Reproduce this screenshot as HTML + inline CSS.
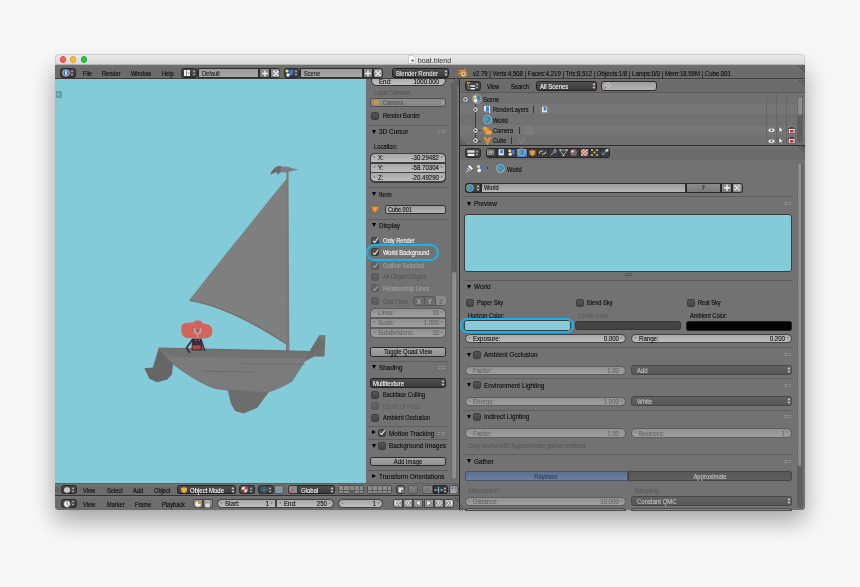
<!DOCTYPE html><html><head><meta charset="utf-8"><style>
*{margin:0;padding:0;box-sizing:border-box}
html,body{width:860px;height:587px;overflow:hidden;background:#f7f7f7;font-family:"Liberation Sans",sans-serif}
div{position:absolute}
.t{height:10px;line-height:10px;white-space:nowrap;-webkit-text-stroke:0.07px currentColor;transform:scaleX(0.87);transform-origin:0 50%}
.r{transform-origin:100% 50%}
.c{transform-origin:50% 50%}
</style></head><body><div style="left:0;top:0;width:860px;height:587px;filter:blur(0.35px)"><div style="left:55px;top:60px;width:750px;height:450px;box-shadow:0 10px 24px rgba(0,0,0,0.36);border-radius:4px;background:#777"></div>
<div style="left:55px;top:53.5px;width:750px;height:11.5px;background:linear-gradient(#e9e9e9,#dadada);border-radius:4px 4px 0 0;border:0.5px solid #cdcdcd;border-bottom:0.8px solid #b5b5b5"></div>
<div style="left:59.599999999999994px;top:56.4px;width:6.4px;height:6.4px;border-radius:50%;background:#fc5f57;border:0.5px solid #df4744"></div>
<div style="left:70.1px;top:56.4px;width:6.4px;height:6.4px;border-radius:50%;background:#fdbc2e;border:0.5px solid #dea123"></div>
<div style="left:80.5px;top:56.4px;width:6.4px;height:6.4px;border-radius:50%;background:#28c840;border:0.5px solid #1dad2b"></div>
<svg style="position:absolute;left:408.3px;top:55.3px" width="8" height="9" viewBox="0 0 8 9"><path d="M0.5 0.5 H5 L7.5 3 V8.5 H0.5Z" fill="#fbfbfb" stroke="#b8b8b8" stroke-width="0.6"/><circle cx="4.6" cy="5.6" r="1.7" fill="#f0a040"/><circle cx="4.7" cy="5.6" r="0.8" fill="#4a7ac0"/></svg>
<div class="t" style="left:417.7px;top:55.6px;font-size:7.2px;color:#4a4a4a;transform:none;-webkit-text-stroke:0.1px #4a4a4a;">boat.blend</div>
<div style="left:55px;top:65px;width:750px;height:14px;background:linear-gradient(#727272,#6b6b6b 25%,#6b6b6b);border-bottom:1px solid #3c3c3c"></div>
<div style="left:55px;top:79px;width:311px;height:404px;background:#84cbd9"></div>
<svg style="position:absolute;left:0;top:0" width="366" height="483" viewBox="0 0 366 483">
<defs><clipPath id="vp"><rect x="55" y="79" width="311" height="404"/></clipPath></defs>
<g clip-path="url(#vp)">
<!-- sail -->
<path d="M287.5 177.5 C 265 205, 225 255, 190 299 C 189.2 300.2, 189.8 300.8, 191 301 C 216 305, 246 318, 287.5 345 Z" fill="#7f7f7f"/>
<path d="M189.8 300.3 C 216 304.5, 246 317.5, 287.5 344.5" fill="none" stroke="#6f6f6f" stroke-width="1.3"/>
<!-- mast -->
<path d="M286.5 171.5 L 288.5 171.5 L 289.3 352 L 285.9 352 Z" fill="#7a7a7a"/>
<!-- flag -->
<path d="M270.2 175 C 271.5 171, 274 167.5, 278 166 C 280 165.8, 282 166.2, 283 167.5 L 283 171.5 C 281 172, 279.5 172.5, 277.5 175 C 277 173.5, 277 172.5, 277.5 172 C 275 172.5, 272.5 173.5, 270.2 175 Z" fill="#6a6a6a"/>
<path d="M280.5 167.5 C 283 166, 287 166, 290 167.5 C 292 168.3, 294 168.8, 299.2 169.4 C 295 170, 292 170.5, 290 171.5 C 287 172.8, 283 172.8, 280.5 171.5 Z" fill="#7d7d7d"/>
<!-- stern tail -->
<path d="M158.7 348 L 156 357 L 152.8 367.5 L 144.3 368.2 L 149.4 378.8 L 157 382.2 L 167.3 379.6 L 172 374.2 L 173 364 L 165 352 Z" fill="#666"/>
<!-- keel -->
<path d="M227.5 389 L 230.9 403.5 L 235.1 411.1 L 243.6 413.4 L 257.3 407.7 L 269.2 391.6 Z" fill="#6d6d6d"/>
<!-- hull body -->
<path d="M159 349 L 311.5 352 L 313.5 356.6 L 305 361 C 300 368, 296 375, 292.3 380.8 C 285 386, 275 390, 267 392.3 L 228.5 390.2 C 222 389.5, 215 388.5, 212.8 387.7 C 198 382, 185 373, 173 364 Z" fill="#7b7b7b" stroke="#717171" stroke-width="0.8"/>
<!-- deck band -->
<path d="M158.7 348 L 309.2 351.5 L 313.5 356.6 L 306 358.6 L 170 357 C 166 353.5, 162 351, 158.7 348 Z" fill="#727272"/>
<path d="M158.7 348 L 309.2 351.5" stroke="#6a6a6a" stroke-width="1.2"/>
<!-- bow -->
<path d="M305 360 L 309.2 351.5 L 319.4 335.3 L 325.4 335.3 L 324.5 356.6 L 313.5 356.6 Z" fill="#6f6f6f"/>
<path d="M319.4 335.3 L 325.4 335.3 L 322.5 341 Z" fill="#7a7a7a"/>
<path d="M309 355 L 322.5 341" stroke="#666" stroke-width="0.8"/>
<!-- hull lines -->
<path d="M203 371.1 L 254 372" stroke="#5f5f5f" stroke-width="0.6"/>
<path d="M238.5 363.4 L 305 364.6" stroke="#6c6c6c" stroke-width="0.6"/>
<!-- person -->
<path d="M192 338.5 L 201.5 338.5 L 202.5 350.5 L 191.5 350.5 Z" fill="#3a2b3e"/>
<rect x="192.6" y="345.3" width="8" height="4" fill="#b24a3c"/>
<path d="M192.5 339.5 L 186.5 347.8 L 189.8 353" fill="none" stroke="#3a2b3e" stroke-width="1.6" stroke-linejoin="round"/>
<path d="M201 339.5 L 204.8 351" fill="none" stroke="#3a2b3e" stroke-width="1.6"/>
<path d="M181.2 329 C 181 324.5, 184 322.5, 188.5 322.8 C 190.5 322.6, 192.5 322.6, 193.8 322.5 C 194 320.8, 196 320.4, 198.2 320.5 C 201 320.6, 202.6 321.8, 202.8 323.6 C 204.5 323.8, 206 324, 207.8 324.6 C 211 325.5, 212.6 328, 212.4 331.5 C 212.3 335.5, 210 337.8, 206 338.2 L 196 338.4 L 186.5 337.8 C 183 337.2, 181.2 334, 181.2 329 Z" fill="#d3645a"/>
<path d="M194.6 328.3 L 194.6 331.5 Q 197.6 336.5 200.6 331.5 L 200.6 328.3" fill="none" stroke="#abadbc" stroke-width="1.5"/>
<path d="M197.6 334.5 L 197.6 338.5" stroke="#abadbc" stroke-width="0.9"/>
<path d="M197.6 329 L 197.6 332" stroke="#a84848" stroke-width="0.9"/>
<circle cx="195.8" cy="340.3" r="0.55" fill="#bbb"/><circle cx="199.5" cy="340.3" r="0.55" fill="#bbb"/>
</g></svg>
<div style="left:55.5px;top:91px;width:6px;height:7px;background:#5f9eab;border-radius:0 1.5px 1.5px 0"></div>
<svg style="position:absolute;left:55.8px;top:92.3px" width="5" height="5"><path d="M2.5 0.5V4.5M0.5 2.5H4.5" stroke="#8cc" stroke-width="0.7"/></svg>
<div style="left:366px;top:79px;width:93px;height:404px;background:#727272"></div>
<div style="left:459px;top:79px;width:1px;height:431px;background:#2b2b2b"></div>
<div style="left:55px;top:483px;width:404px;height:13px;background:linear-gradient(#747474,#6c6c6c 30%,#6c6c6c);border-top:1px solid #5e5e5e;border-bottom:1px solid #333"></div>
<div style="left:55px;top:496px;width:404px;height:14px;background:linear-gradient(#737373,#6c6c6c 30%,#6c6c6c);border-radius:0 0 0 4px"></div>
<div style="left:460px;top:79px;width:345px;height:14px;background:linear-gradient(#717171,#6b6b6b 25%,#6b6b6b);border-bottom:1px solid #5a5a5a"></div>
<div style="left:460px;top:93px;width:345px;height:52px;background:#6f6f6f"></div>
<div style="left:460px;top:145px;width:345px;height:1px;background:#2f2f2f"></div>
<div style="left:460px;top:146px;width:345px;height:14px;background:linear-gradient(#717171,#6b6b6b 25%,#6b6b6b)"></div>
<div style="left:460px;top:160px;width:345px;height:350px;background:#727272;border-radius:0 0 4px 0"></div>
<div style="left:60px;top:68px;width:16px;height:10px;background:linear-gradient(#474747,#363636);border:0.8px solid #2a2a2a;border-radius:2.5px"></div>
<svg style="position:absolute;left:70.2px;top:69.0px" width="4" height="8" viewBox="0 0 4 8"><path d="M0.4 3.2 L2 1 L3.6 3.2Z M0.4 4.8 L2 7 L3.6 4.8Z" fill="#a8a8a8"/></svg>
<svg style="position:absolute;left:62px;top:69px" width="8" height="8" viewBox="0 0 8 8"><circle cx="4" cy="4" r="3.3" fill="#3f6fb0" stroke="#cfd8e6" stroke-width="0.8"/><rect x="3.3" y="2" width="1.4" height="4" fill="#fff"/></svg>
<div class="t" style="left:82.5px;top:68.6px;font-size:6.5px;color:#000;">File</div>
<div class="t" style="left:102.4px;top:68.6px;font-size:6.5px;color:#000;">Render</div>
<div class="t" style="left:130.9px;top:68.6px;font-size:6.5px;color:#000;">Window</div>
<div class="t" style="left:162px;top:68.6px;font-size:6.5px;color:#000;">Help</div>
<div style="left:181.3px;top:68px;width:16.5px;height:9.8px;background:linear-gradient(#474747,#363636);border:0.8px solid #2a2a2a;border-radius:2.5px"></div>
<svg style="position:absolute;left:192.0px;top:68.9px" width="4" height="8" viewBox="0 0 4 8"><path d="M0.4 3.2 L2 1 L3.6 3.2Z M0.4 4.8 L2 7 L3.6 4.8Z" fill="#a8a8a8"/></svg>
<svg style="position:absolute;left:184px;top:70px" width="6" height="6" viewBox="0 0 6 6"><rect x="0" y="0" width="2.5" height="6" fill="#eee"/><rect x="3" y="0" width="3" height="2.8" fill="#eee"/><rect x="3" y="3.2" width="3" height="2.8" fill="#eee"/></svg>
<div style="left:197.5px;top:68px;width:61.5px;height:9.8px;background:linear-gradient(#9a9a9a,#a8a8a8);border:1px solid #2e2e2e;border-radius:0"></div>
<div class="t" style="left:201.5px;top:68.5px;font-size:6.5px;color:#111;">Default</div>
<div style="left:258.9px;top:68px;width:11px;height:9.8px;background:linear-gradient(#8e8e8e,#7c7c7c);border:1px solid #2a2a2a;border-radius:0"></div>
<div class="t c" style="left:164.39999999999998px;width:200px;text-align:center;top:68.5px;font-size:6.5px;color:#000;"></div>
<div style="left:269.9px;top:68px;width:10.5px;height:9.8px;background:linear-gradient(#8e8e8e,#7c7c7c);border:1px solid #2a2a2a;border-radius:0 2.5px 2.5px 0"></div>
<div class="t c" style="left:175.14999999999998px;width:200px;text-align:center;top:68.5px;font-size:6.5px;color:#000;"></div>
<svg style="position:absolute;left:260.5px;top:69.5px" width="8" height="7" viewBox="0 0 8 7"><path d="M4 0.5V6.5M1 3.5H7" stroke="#eee" stroke-width="1.4"/></svg>
<svg style="position:absolute;left:271.5px;top:69.5px" width="8" height="7" viewBox="0 0 8 7"><path d="M1.5 1L6.5 6M6.5 1L1.5 6" stroke="#eee" stroke-width="1.2"/><rect x="1" y="0.8" width="6" height="5.4" fill="none" stroke="#ddd" stroke-width="0.6" rx="1"/></svg>
<div style="left:283.6px;top:68px;width:16.5px;height:9.8px;background:linear-gradient(#474747,#363636);border:0.8px solid #2a2a2a;border-radius:2.5px"></div>
<svg style="position:absolute;left:294.3px;top:68.9px" width="4" height="8" viewBox="0 0 4 8"><path d="M0.4 3.2 L2 1 L3.6 3.2Z M0.4 4.8 L2 7 L3.6 4.8Z" fill="#a8a8a8"/></svg>
<svg style="position:absolute;left:285px;top:69px" width="9" height="8" viewBox="0 0 9 8"><circle cx="2" cy="2" r="1.6" fill="#e8e07a"/><rect x="4.5" y="1" width="3.5" height="5" fill="#3d7bd6" rx="0.8"/><circle cx="3" cy="6" r="1.7" fill="#f0f0f0"/></svg>
<div style="left:300.1px;top:68px;width:62.6px;height:9.8px;background:linear-gradient(#9a9a9a,#a8a8a8);border:1px solid #2e2e2e;border-radius:0"></div>
<div class="t" style="left:304.1px;top:68.5px;font-size:6.5px;color:#111;">Scene</div>
<div style="left:362.7px;top:68px;width:10px;height:9.8px;background:linear-gradient(#8e8e8e,#7c7c7c);border:1px solid #2a2a2a;border-radius:0"></div>
<div class="t c" style="left:267.7px;width:200px;text-align:center;top:68.5px;font-size:6.5px;color:#000;"></div>
<div style="left:372.6px;top:68px;width:10.3px;height:9.8px;background:linear-gradient(#8e8e8e,#7c7c7c);border:1px solid #2a2a2a;border-radius:0 2.5px 2.5px 0"></div>
<div class="t c" style="left:277.75px;width:200px;text-align:center;top:68.5px;font-size:6.5px;color:#000;"></div>
<svg style="position:absolute;left:364px;top:69.5px" width="8" height="7" viewBox="0 0 8 7"><path d="M4 0.5V6.5M1 3.5H7" stroke="#eee" stroke-width="1.4"/></svg>
<svg style="position:absolute;left:374px;top:69.5px" width="8" height="7" viewBox="0 0 8 7"><path d="M1.5 1L6.5 6M6.5 1L1.5 6" stroke="#eee" stroke-width="1.2"/><rect x="1" y="0.8" width="6" height="5.4" fill="none" stroke="#ddd" stroke-width="0.6" rx="1"/></svg>
<div style="left:392.1px;top:68px;width:57.3px;height:9.8px;background:linear-gradient(#505050,#3a3a3a);border:1px solid #222;border-radius:2.5px"></div>
<div class="t" style="left:396.1px;top:69.0px;font-size:6.9px;color:#eee;-webkit-text-stroke:0.08px currentColor;">Blender Render</div>
<svg style="position:absolute;left:444.00000000000006px;top:68.9px" width="4" height="8" viewBox="0 0 4 8"><path d="M0.4 3.2 L2 1 L3.6 3.2Z M0.4 4.8 L2 7 L3.6 4.8Z" fill="#cfcfcf"/></svg>
<svg style="position:absolute;left:457px;top:68px" width="11" height="10" viewBox="0 0 11 10"><path d="M1 6.5 L5 3.8 L3.2 2.5 L7 2.6 L8.5 1" stroke="#f08a1c" stroke-width="1.4" fill="none"/><circle cx="6.5" cy="5.8" r="3.3" fill="#f08a1c"/><circle cx="6.6" cy="5.8" r="1.9" fill="#fff"/><circle cx="6.6" cy="5.8" r="1.2" fill="#3c6fb4"/></svg>
<div class="t" style="left:472.5px;top:68.6px;font-size:6.9px;color:#000;">v2.79 | Verts:4,508 | Faces:4,219 | Tris:8,512 | Objects:1/8 | Lamps:0/0 | Mem:18.59M | Cube.001</div>
<div style="left:465px;top:80.5px;width:16px;height:10.5px;background:linear-gradient(#474747,#363636);border:0.8px solid #2a2a2a;border-radius:2.5px"></div>
<svg style="position:absolute;left:475.2px;top:81.75px" width="4" height="8" viewBox="0 0 4 8"><path d="M0.4 3.2 L2 1 L3.6 3.2Z M0.4 4.8 L2 7 L3.6 4.8Z" fill="#a8a8a8"/></svg>
<svg style="position:absolute;left:467px;top:82px" width="8" height="8" viewBox="0 0 8 8"><rect x="0" y="0" width="3" height="1.5" fill="#e9a23b"/><path d="M1 1.5V7M1 4H3M1 7H3" stroke="#9ab" stroke-width="0.6" fill="none"/><rect x="3.5" y="3.2" width="4.5" height="1.5" fill="#eee"/><rect x="3.5" y="6" width="4.5" height="1.5" fill="#eee"/></svg>
<div class="t" style="left:487.3px;top:81.6px;font-size:6.5px;color:#000;">View</div>
<div class="t" style="left:510.5px;top:81.6px;font-size:6.5px;color:#000;">Search</div>
<div style="left:535.7px;top:80.5px;width:61.3px;height:10.5px;background:linear-gradient(#505050,#3a3a3a);border:1px solid #222;border-radius:2.5px"></div>
<div class="t" style="left:539.7px;top:81.85px;font-size:6.9px;color:#fff;-webkit-text-stroke:0.08px currentColor;">All Scenes</div>
<svg style="position:absolute;left:591.6px;top:81.75px" width="4" height="8" viewBox="0 0 4 8"><path d="M0.4 3.2 L2 1 L3.6 3.2Z M0.4 4.8 L2 7 L3.6 4.8Z" fill="#cfcfcf"/></svg>
<div style="left:600.8px;top:80.5px;width:56.5px;height:10.5px;background:linear-gradient(#9c9c9c,#b4b4b4);border:1px solid #2e2e2e;border-radius:3px"></div>
<svg style="position:absolute;left:603px;top:81.5px" width="8" height="8" viewBox="0 0 8 8"><circle cx="5" cy="3" r="2.2" fill="none" stroke="#d0d0d0" stroke-width="0.9"/><path d="M3.4 4.6L1 7" stroke="#c0703a" stroke-width="1.2"/></svg>
<div style="left:460px;top:93.3px;width:345px;height:10.4px;background:#717171"></div>
<div style="left:460px;top:103.7px;width:345px;height:10.4px;background:#767676"></div>
<div style="left:460px;top:114.1px;width:345px;height:10.4px;background:#717171"></div>
<div style="left:460px;top:124.5px;width:345px;height:10.4px;background:#767676"></div>
<div style="left:460px;top:134.9px;width:345px;height:10.4px;background:#717171"></div>
<div style="left:765.8px;top:93.3px;width:0.7px;height:52px;background:#666"></div>
<div style="left:775.8px;top:93.3px;width:0.7px;height:52px;background:#666"></div>
<div style="left:786.2px;top:93.3px;width:0.7px;height:52px;background:#666"></div>
<div style="left:797px;top:95.5px;width:6px;height:47px;background:#5f5f5f;border-radius:3px"></div>
<div style="left:797.1px;top:95.8px;width:5.6px;height:20px;background:linear-gradient(90deg,#868686,#929292);border:0.5px solid #6a6a6a;border-radius:3px"></div>
<div style="left:475.3px;top:103.5px;width:0.7px;height:37.5px;background:#3a3a3a"></div>
<div style="left:475.3px;top:130.3px;width:6px;height:0.7px;background:#3a3a3a"></div>
<div style="left:475.3px;top:140.6px;width:6px;height:0.7px;background:#3a3a3a"></div>
<svg style="position:absolute;left:461.7px;top:95.5px" width="7" height="7" viewBox="0 0 7 7"><circle cx="3.5" cy="3.5" r="2.7" fill="#e6e6e6" stroke="#3a3a3a" stroke-width="0.7"/><path d="M2.6 2 L4.8 3.5 L2.6 5Z" fill="#222"/></svg>
<svg style="position:absolute;left:471.5px;top:94px" width="10" height="10" viewBox="0 0 10 10"><circle cx="5" cy="5" r="4.7" fill="#8a8a8a" stroke="#aaa" stroke-width="0.5"/><circle cx="3" cy="3" r="1.6" fill="#e8e07a"/><rect x="5" y="1.5" width="3" height="5" fill="#3d7bd6" rx="0.6"/><circle cx="3.6" cy="6.6" r="1.8" fill="#f4f4f4"/></svg>
<div class="t" style="left:482.7px;top:94.6px;font-size:6.5px;color:#000;">Scene</div>
<svg style="position:absolute;left:472.2px;top:105.7px" width="7" height="7" viewBox="0 0 7 7"><circle cx="3.5" cy="3.5" r="2.7" fill="#e6e6e6" stroke="#3a3a3a" stroke-width="0.7"/><path d="M2.6 2 L4.8 3.5 L2.6 5Z" fill="#222"/></svg>
<svg style="position:absolute;left:482.5px;top:104.5px" width="8" height="9" viewBox="0 0 8 9"><rect x="0.5" y="0.5" width="7" height="8" fill="#e8e8e8" stroke="#444" stroke-width="0.5"/><rect x="3" y="1.5" width="3" height="4.5" fill="#3d7bd6"/><rect x="1" y="6.5" width="5" height="1.2" fill="#444"/></svg>
<div class="t" style="left:493.1px;top:104.8px;font-size:6.5px;color:#000;">RenderLayers</div>
<div style="left:533.3px;top:106px;width:0.8px;height:6.5px;background:#333"></div>
<svg style="position:absolute;left:539.5px;top:104.5px" width="9" height="9" viewBox="0 0 9 9"><circle cx="4.5" cy="4.5" r="4.3" fill="#7a7a7a" stroke="#999" stroke-width="0.4"/><rect x="1.8" y="1.2" width="5.5" height="6.5" fill="#e8e8e8" stroke="#444" stroke-width="0.4"/><rect x="3.6" y="2" width="2.6" height="3.6" fill="#3d7bd6"/></svg>
<svg style="position:absolute;left:482.6px;top:115.3px" width="9" height="9" viewBox="0 0 9 9"><circle cx="4.5" cy="4.5" r="4.2" fill="#3d86c6" stroke="#c8d4e4" stroke-width="0.6"/><path d="M2 3.5 Q3.5 2 5 3.2 L4.5 5.5 L2.5 6.5Z M5.5 6 L7.5 4.5 L7 7Z" fill="#5fae5f"/></svg>
<div class="t" style="left:493.1px;top:115.6px;font-size:6.5px;color:#000;">World</div>
<svg style="position:absolute;left:472.2px;top:127.0px" width="7" height="7" viewBox="0 0 7 7"><circle cx="3.5" cy="3.5" r="2.7" fill="#e6e6e6" stroke="#3a3a3a" stroke-width="0.7"/><path d="M2.6 2 L4.8 3.5 L2.6 5Z" fill="#222"/></svg>
<svg style="position:absolute;left:482.5px;top:125.8px" width="9" height="9" viewBox="0 0 9 9"><rect x="0.5" y="1.5" width="5.5" height="4" fill="#e58a2b" rx="1"/><rect x="2.5" y="4.5" width="6" height="4" fill="#f0a040" rx="1"/><circle cx="2" cy="2.2" r="1.4" fill="#f7b04a"/></svg>
<div class="t" style="left:493.1px;top:126.1px;font-size:6.5px;color:#000;">Camera</div>
<div style="left:518.5px;top:127.2px;width:0.8px;height:6.5px;background:#333"></div>
<svg style="position:absolute;left:524px;top:125.5px" width="9" height="9" viewBox="0 0 9 9"><circle cx="4.5" cy="4.5" r="4" fill="none" stroke="#8a8a8a" stroke-width="0.8"/><circle cx="4.5" cy="4.5" r="2" fill="none" stroke="#8a8a8a" stroke-width="0.7"/></svg>
<svg style="position:absolute;left:472.2px;top:137.1px" width="7" height="7" viewBox="0 0 7 7"><circle cx="3.5" cy="3.5" r="2.7" fill="#e6e6e6" stroke="#3a3a3a" stroke-width="0.7"/><path d="M2.6 2 L4.8 3.5 L2.6 5Z" fill="#222"/></svg>
<svg style="position:absolute;left:482.5px;top:136px" width="9" height="9" viewBox="0 0 9 9"><path d="M0.8 1 L4.5 8 L8.2 1" fill="none" stroke="#e58a2b" stroke-width="1.6"/><path d="M2.6 1.2 L4.5 5 L6.4 1.2" fill="none" stroke="#f7c070" stroke-width="0.7"/></svg>
<div class="t" style="left:493.1px;top:136.2px;font-size:6.5px;color:#000;">Cube</div>
<div style="left:510.8px;top:137.3px;width:0.8px;height:6.5px;background:#333"></div>
<svg style="position:absolute;left:516.5px;top:136px" width="9" height="9" viewBox="0 0 9 9"><path d="M1 1.5 L4.5 7.5 L8 1.5" fill="none" stroke="#8e8e8e" stroke-width="0.8"/></svg>
<svg style="position:absolute;left:767.5px;top:127.30000000000001px" width="7" height="6" viewBox="0 0 7 6"><ellipse cx="3.5" cy="3.2" rx="3" ry="1.7" fill="#f2f2f2"/><circle cx="3.5" cy="3.2" r="0.9" fill="#333"/></svg>
<svg style="position:absolute;left:778px;top:126.30000000000001px" width="6" height="8" viewBox="0 0 6 8"><path d="M1 0.5 L1 6.5 L2.6 5.2 L3.8 7.5 L4.6 7 L3.5 4.8 L5.5 4.6Z" fill="#f4f4f4" stroke="#222" stroke-width="0.4"/></svg>
<svg style="position:absolute;left:787.5px;top:126.80000000000001px" width="8" height="7" viewBox="0 0 8 7"><rect x="0.5" y="1.5" width="6.5" height="5" fill="#ddd" stroke="#333" stroke-width="0.5"/><rect x="2" y="3" width="3.5" height="2.5" fill="#c03030"/><rect x="2" y="0.3" width="3.5" height="1.3" fill="#333"/></svg>
<svg style="position:absolute;left:767.5px;top:137.6px" width="7" height="6" viewBox="0 0 7 6"><ellipse cx="3.5" cy="3.2" rx="3" ry="1.7" fill="#f2f2f2"/><circle cx="3.5" cy="3.2" r="0.9" fill="#333"/></svg>
<svg style="position:absolute;left:778px;top:136.6px" width="6" height="8" viewBox="0 0 6 8"><path d="M1 0.5 L1 6.5 L2.6 5.2 L3.8 7.5 L4.6 7 L3.5 4.8 L5.5 4.6Z" fill="#f4f4f4" stroke="#222" stroke-width="0.4"/></svg>
<svg style="position:absolute;left:787.5px;top:137.1px" width="8" height="7" viewBox="0 0 8 7"><rect x="0.5" y="1.5" width="6.5" height="5" fill="#ddd" stroke="#333" stroke-width="0.5"/><rect x="2" y="3" width="3.5" height="2.5" fill="#c03030"/><rect x="2" y="0.3" width="3.5" height="1.3" fill="#333"/></svg>
<div style="left:460px;top:138px;width:7px;height:7px;background:repeating-linear-gradient(45deg,#4a4a4a 0 0.9px,transparent 0.9px 1.8px);clip-path:polygon(0 0,100% 100%,0 100%)"></div>
<div style="left:465px;top:148px;width:15.8px;height:9.6px;background:linear-gradient(#474747,#363636);border:0.8px solid #2a2a2a;border-radius:2.5px"></div>
<svg style="position:absolute;left:475.0px;top:148.8px" width="4" height="8" viewBox="0 0 4 8"><path d="M0.4 3.2 L2 1 L3.6 3.2Z M0.4 4.8 L2 7 L3.6 4.8Z" fill="#a8a8a8"/></svg>
<svg style="position:absolute;left:467px;top:149.8px" width="8" height="6.5" viewBox="0 0 8 6.5"><rect x="0.3" y="0.3" width="7.4" height="2.4" fill="#ddd"/><rect x="0.3" y="3.6" width="7.4" height="2.6" fill="#f2f2f2" stroke="#333" stroke-width="0.4"/></svg>
<div style="left:485.5px;top:148px;width:124.5px;height:9.6px;background:#3c3c3c;border:1px solid #262626;border-radius:2.5px"></div>
<div style="left:495.875px;top:149px;width:0.6px;height:7.6px;background:#2a2a2a"></div>
<div style="left:506.25px;top:149px;width:0.6px;height:7.6px;background:#2a2a2a"></div>
<div style="left:517.125px;top:148.5px;width:10.375px;height:8.6px;background:linear-gradient(#6b93cf,#4c74b4)"></div>
<div style="left:527.0px;top:149px;width:0.6px;height:7.6px;background:#2a2a2a"></div>
<div style="left:537.375px;top:149px;width:0.6px;height:7.6px;background:#2a2a2a"></div>
<div style="left:547.75px;top:149px;width:0.6px;height:7.6px;background:#2a2a2a"></div>
<div style="left:558.125px;top:149px;width:0.6px;height:7.6px;background:#2a2a2a"></div>
<div style="left:568.5px;top:149px;width:0.6px;height:7.6px;background:#2a2a2a"></div>
<div style="left:578.875px;top:149px;width:0.6px;height:7.6px;background:#2a2a2a"></div>
<div style="left:589.25px;top:149px;width:0.6px;height:7.6px;background:#2a2a2a"></div>
<div style="left:599.625px;top:149px;width:0.6px;height:7.6px;background:#2a2a2a"></div>
<svg style="position:absolute;left:486.3px;top:148.4px" width="9" height="9" viewBox="0 0 9 9"><rect x="1.5" y="2" width="6" height="4.5" fill="#555" stroke="#ccc" stroke-width="0.6"/><rect x="2.5" y="3" width="4" height="2.5" fill="#aaa"/></svg>
<svg style="position:absolute;left:496.675px;top:148.4px" width="9" height="9" viewBox="0 0 9 9"><rect x="1.5" y="1" width="5.5" height="6.5" fill="#e8e8e8" stroke="#444" stroke-width="0.4"/><rect x="3.2" y="1.8" width="2.6" height="3.6" fill="#3d7bd6"/></svg>
<svg style="position:absolute;left:507.05px;top:148.4px" width="9" height="9" viewBox="0 0 9 9"><circle cx="2.8" cy="2.8" r="1.5" fill="#e8e07a"/><rect x="4.5" y="2" width="3" height="4.5" fill="#3d7bd6"/><circle cx="3.2" cy="6.2" r="1.6" fill="#eee"/></svg>
<svg style="position:absolute;left:517.425px;top:148.4px" width="9" height="9" viewBox="0 0 9 9"><circle cx="4.5" cy="4.3" r="3.6" fill="#3d86c6" stroke="#d8e4f4" stroke-width="0.6"/><path d="M2 3.5 Q3.5 2 5 3.2 L4.5 5.5 L2.5 6.5Z" fill="#5fae5f"/></svg>
<svg style="position:absolute;left:527.8px;top:148.4px" width="9" height="9" viewBox="0 0 9 9"><path d="M1.5 3 L4.5 1.5 L7.5 3 L7.5 6.5 L4.5 8 L1.5 6.5Z" fill="#d98f3a" stroke="#6a4010" stroke-width="0.4"/><path d="M1.5 3 L4.5 4.5 L7.5 3 M4.5 4.5V8" stroke="#f6c07a" stroke-width="0.5" fill="none"/></svg>
<svg style="position:absolute;left:538.175px;top:148.4px" width="9" height="9" viewBox="0 0 9 9"><path d="M1.5 5.5 Q1 3 3.5 3 L5 3 M4 6 L5.5 6 Q8 6 7.5 3.5" fill="none" stroke="#ccc" stroke-width="1"/></svg>
<svg style="position:absolute;left:548.55px;top:148.4px" width="9" height="9" viewBox="0 0 9 9"><path d="M1.5 7.5 L5 4 M5 4 Q4 1.5 6.5 1 L6 2.5 L7.5 3 Q7.5 5 5 4" fill="none" stroke="#6fa0e0" stroke-width="1"/></svg>
<svg style="position:absolute;left:558.925px;top:148.4px" width="9" height="9" viewBox="0 0 9 9"><path d="M1 2 L4.5 7.5 L8 2Z" fill="none" stroke="#cfcfcf" stroke-width="0.7"/><circle cx="1" cy="2" r="0.8" fill="#eee"/><circle cx="8" cy="2" r="0.8" fill="#eee"/><circle cx="4.5" cy="7.5" r="0.8" fill="#eee"/></svg>
<svg style="position:absolute;left:569.3px;top:148.4px" width="9" height="9" viewBox="0 0 9 9"><circle cx="4.5" cy="4.5" r="3.5" fill="#7a6a6a"/><circle cx="3.5" cy="3.3" r="1.4" fill="#d8c8c8"/></svg>
<svg style="position:absolute;left:579.675px;top:148.4px" width="9" height="9" viewBox="0 0 9 9"><rect x="1.3" y="1.3" width="6.4" height="6.4" fill="#eee"/><path d="M1.3 1.3h1.6v1.6h-1.6zM4.5 1.3h1.6v1.6h-1.6zM2.9 2.9h1.6v1.6h-1.6zM6.1 2.9h1.6v1.6h-1.6zM1.3 4.5h1.6v1.6h-1.6zM4.5 4.5h1.6v1.6h-1.6zM2.9 6.1h1.6v1.6h-1.6zM6.1 6.1h1.6v1.6h-1.6z" fill="#c04040"/></svg>
<svg style="position:absolute;left:590.05px;top:148.4px" width="9" height="9" viewBox="0 0 9 9"><circle cx="2" cy="2" r="1" fill="#e8c060"/><circle cx="7" cy="2" r="1" fill="#e8c060"/><circle cx="2" cy="7" r="1" fill="#e8c060"/><circle cx="7" cy="7" r="1" fill="#e8c060"/><circle cx="4.5" cy="4.5" r="1" fill="#e8c060"/></svg>
<svg style="position:absolute;left:600.425px;top:148.4px" width="9" height="9" viewBox="0 0 9 9"><path d="M1 4.5 L3 7 L7 1.5" stroke="#6fa0e0" stroke-width="1" fill="none"/><circle cx="7" cy="2.2" r="1.5" fill="#ccc"/></svg>
<div style="left:797.5px;top:146px;width:7.5px;height:7.5px;background:repeating-linear-gradient(45deg,#4a4a4a 0 0.9px,transparent 0.9px 1.8px);clip-path:polygon(0 0,100% 0,100% 100%)"></div>
<div style="left:797.5px;top:65.3px;width:7.5px;height:7.5px;background:repeating-linear-gradient(45deg,#4a4a4a 0 0.9px,transparent 0.9px 1.8px);clip-path:polygon(0 0,100% 0,100% 100%)"></div>
<div style="left:797.5px;top:79.5px;width:7.5px;height:7.5px;background:repeating-linear-gradient(45deg,#4a4a4a 0 0.9px,transparent 0.9px 1.8px);clip-path:polygon(0 0,100% 0,100% 100%)"></div>
<svg style="position:absolute;left:465px;top:164.5px" width="8" height="8" viewBox="0 0 8 8"><path d="M1 7.5 L3.5 5 M2.5 3 L5 5.5 M3.5 1.5 L6.5 4.5 L7.5 3.5 L4.5 0.5Z" stroke="#eee" stroke-width="1" fill="#eee"/></svg>
<svg style="position:absolute;left:475.5px;top:164px" width="9" height="9" viewBox="0 0 9 9"><circle cx="2.5" cy="2.5" r="1.6" fill="#e8e07a"/><rect x="5" y="2" width="3.2" height="5" fill="#3d7bd6" rx="0.6"/><circle cx="3.2" cy="6.4" r="1.8" fill="#f4f4f4"/></svg>
<div style="left:487.2px;top:166.85px;width:0;height:0;border-top:1.75px solid transparent;border-bottom:1.75px solid transparent;border-left:2.8000000000000003px solid #222"></div>
<svg style="position:absolute;left:496px;top:164.2px" width="9" height="9" viewBox="0 0 9 9"><circle cx="4.5" cy="4.5" r="4" fill="#3d86c6" stroke="#c8d4e4" stroke-width="0.6"/><path d="M2 3.5 Q3.5 2 5 3.2 L4.5 5.5 L2.5 6.5Z M5.5 6 L7.5 4.5 L7 7Z" fill="#5fae5f"/></svg>
<div class="t" style="left:507.2px;top:164.6px;font-size:6.5px;color:#000;">World</div>
<div style="left:464.7px;top:182.8px;width:16.3px;height:9.8px;background:linear-gradient(#4a4a4a,#383838);border:1px solid #262626;border-radius:2.5px 0 0 2.5px"></div>
<svg style="position:absolute;left:466px;top:183.8px" width="8" height="8" viewBox="0 0 8 8"><circle cx="4" cy="4" r="3.5" fill="#3d86c6" stroke="#c8d4e4" stroke-width="0.5"/><path d="M1.8 3 Q3 1.8 4.5 2.8 L4 5 L2.2 5.8Z" fill="#5fae5f"/></svg>
<svg style="position:absolute;left:475.6px;top:183.70000000000002px" width="4" height="8" viewBox="0 0 4 8"><path d="M0.4 3.2 L2 1 L3.6 3.2Z M0.4 4.8 L2 7 L3.6 4.8Z" fill="#bbb"/></svg>
<div style="left:480.8px;top:182.8px;width:205.5px;height:9.8px;background:linear-gradient(#9a9a9a,#a8a8a8);border:1px solid #2e2e2e;border-radius:0"></div>
<div class="t" style="left:483.8px;top:183.3px;font-size:6.5px;color:#111;">World</div>
<div style="left:480.8px;top:182.8px;width:205.5px;height:9.8px;background:linear-gradient(#9a9a9a,#b8b8b8);border:1px solid #2e2e2e"></div>
<div class="t" style="left:483.8px;top:183.29999999999998px;font-size:6.5px;color:#000;">World</div>
<div style="left:686.3px;top:182.8px;width:34.9px;height:9.8px;background:linear-gradient(#8c8c8c,#7a7a7a);border:1px solid #2a2a2a;border-radius:0"></div>
<div class="t c" style="left:603.75px;width:200px;text-align:center;top:183.3px;font-size:6.5px;color:#222;">F</div>
<div style="left:721.2px;top:182.8px;width:10.4px;height:9.8px;background:linear-gradient(#8c8c8c,#7a7a7a);border:1px solid #2a2a2a;border-radius:0"></div>
<div class="t c" style="left:626.4000000000001px;width:200px;text-align:center;top:183.3px;font-size:6.5px;color:#000;"></div>
<div style="left:731.6px;top:182.8px;width:11px;height:9.8px;background:linear-gradient(#8c8c8c,#7a7a7a);border:1px solid #2a2a2a;border-radius:0 2.5px 2.5px 0"></div>
<div class="t c" style="left:637.1px;width:200px;text-align:center;top:183.3px;font-size:6.5px;color:#000;"></div>
<svg style="position:absolute;left:722.7px;top:184px" width="8" height="7.5" viewBox="0 0 8 7.5"><path d="M4 0.5V7M0.8 3.8H7.2" stroke="#f0f0f0" stroke-width="1.4"/></svg>
<svg style="position:absolute;left:733.2px;top:184px" width="8" height="7.5" viewBox="0 0 8 7.5"><path d="M1.5 1.2L6.5 6.3M6.5 1.2L1.5 6.3" stroke="#eee" stroke-width="1.2"/><rect x="1" y="0.8" width="6" height="6" fill="none" stroke="#ddd" stroke-width="0.6" rx="1"/></svg>
<div style="left:463px;top:196.2px;width:330.4px;height:1px;background:#5e5e5e"></div>
<div style="left:466.5px;top:201.5px;width:0;height:0;border-left:2.7px solid transparent;border-right:2.7px solid transparent;border-top:4.32px solid #000"></div>
<div class="t" style="left:473.5px;top:199.1px;font-size:7.4px;color:#000;">Preview</div>
<div style="left:784.0px;top:202.2px;width:7px;height:0.8px;background:repeating-linear-gradient(90deg,#8e8e8e 0 2px,transparent 2px 2.5px)"></div>
<div style="left:784.0px;top:204.2px;width:7px;height:0.8px;background:repeating-linear-gradient(90deg,#8e8e8e 0 2px,transparent 2px 2.5px)"></div>
<div style="left:464.2px;top:214.2px;width:327.6px;height:57.6px;background:#84cbd9;border:1px solid #3a3a3a;border-radius:3px"></div>
<div style="left:624.5px;top:273.4px;width:7px;height:0.7px;background:#555"></div>
<div style="left:624.5px;top:275.2px;width:7px;height:0.7px;background:#555"></div>
<div style="left:463px;top:279.5px;width:330.4px;height:1px;background:#5e5e5e"></div>
<div style="left:466.5px;top:284.8px;width:0;height:0;border-left:2.7px solid transparent;border-right:2.7px solid transparent;border-top:4.32px solid #000"></div>
<div class="t" style="left:473.5px;top:282.40000000000003px;font-size:7.4px;color:#000;">World</div>
<div style="left:784.0px;top:285.5px;width:7px;height:0.8px;background:repeating-linear-gradient(90deg,#8e8e8e 0 2px,transparent 2px 2.5px)"></div>
<div style="left:784.0px;top:287.5px;width:7px;height:0.8px;background:repeating-linear-gradient(90deg,#8e8e8e 0 2px,transparent 2px 2.5px)"></div>
<div style="left:465.7px;top:298.5px;width:8px;height:8px;background:linear-gradient(#555,#454545);border:0.7px solid #3a3a3a;border-radius:2.2px"></div>
<div class="t" style="left:476.5px;top:298.1px;font-size:6.5px;color:#000;">Paper Sky</div>
<div style="left:576.0px;top:298.5px;width:8px;height:8px;background:linear-gradient(#555,#454545);border:0.7px solid #3a3a3a;border-radius:2.2px"></div>
<div class="t" style="left:586.6px;top:298.1px;font-size:6.5px;color:#000;">Blend Sky</div>
<div style="left:687.0px;top:298.5px;width:8px;height:8px;background:linear-gradient(#555,#454545);border:0.7px solid #3a3a3a;border-radius:2.2px"></div>
<div class="t" style="left:698.4px;top:298.1px;font-size:6.5px;color:#000;">Real Sky</div>
<div class="t" style="left:467.9px;top:311.20000000000005px;font-size:6.5px;color:#000;">Horizon Color:</div>
<div class="t" style="left:578px;top:311.20000000000005px;font-size:6.5px;color:#5a5a5a;-webkit-text-stroke:0.08px currentColor;">Zenith Color:</div>
<div class="t" style="left:689.6px;top:311.20000000000005px;font-size:6.5px;color:#000;">Ambient Color:</div>
<div style="left:464.3px;top:320.4px;width:106.5px;height:10.2px;background:#84cad8;border:1px solid #3a3a3a;border-radius:2.5px"></div>
<div style="left:460.4px;top:317.9px;width:114px;height:15px;border:2.6px solid #14b4ee;border-radius:7px"></div>
<div style="left:575px;top:320.6px;width:105.8px;height:9.9px;background:#444;border:1px solid #363636;border-radius:2.5px"></div>
<div style="left:685.8px;top:320.8px;width:106.1px;height:9.8px;background:#030303;border:1px solid #222;border-radius:2.5px"></div>
<div style="left:464.7px;top:333.6px;width:161px;height:9.8px;background:linear-gradient(#a8a8a8,#bdbdbd);border:1px solid #404040;border-radius:4.9px"></div>
<div class="t" style="left:472.7px;top:334.1px;font-size:7.0px;color:#000;">Exposure:</div>
<div class="t r" style="left:418.70000000000005px;width:200px;text-align:right;top:334.1px;font-size:7.0px;color:#000;">0.000</div>
<div style="left:467.7px;top:337.0px;width:0;height:0;border-top:1.5px solid transparent;border-bottom:1.5px solid transparent;border-right:2px solid #777"></div>
<div style="left:620.7px;top:337.0px;width:0;height:0;border-top:1.5px solid transparent;border-bottom:1.5px solid transparent;border-left:2px solid #777"></div>
<div style="left:630.6px;top:333.5px;width:161.3px;height:9.8px;background:linear-gradient(#a8a8a8,#bdbdbd);border:1px solid #404040;border-radius:4.9px"></div>
<div class="t" style="left:638.6px;top:334.0px;font-size:7.0px;color:#000;">Range:</div>
<div class="t r" style="left:584.9000000000001px;width:200px;text-align:right;top:334.0px;font-size:7.0px;color:#000;">0.200</div>
<div style="left:633.6px;top:336.9px;width:0;height:0;border-top:1.5px solid transparent;border-bottom:1.5px solid transparent;border-right:2px solid #777"></div>
<div style="left:786.9000000000001px;top:336.9px;width:0;height:0;border-top:1.5px solid transparent;border-bottom:1.5px solid transparent;border-left:2px solid #777"></div>
<div style="left:463px;top:347.2px;width:330.4px;height:1px;background:#5e5e5e"></div>
<div style="left:466.5px;top:352.7px;width:0;height:0;border-left:2.7px solid transparent;border-right:2.7px solid transparent;border-top:4.32px solid #000"></div>
<div style="left:473.0px;top:350.7px;width:8px;height:8px;background:linear-gradient(#555,#454545);border:0.7px solid #3a3a3a;border-radius:2.2px"></div>
<div class="t" style="left:483.6px;top:350.3px;font-size:7.4px;color:#000;">Ambient Occlusion</div>
<div style="left:784.0px;top:353.4px;width:7px;height:0.8px;background:repeating-linear-gradient(90deg,#8e8e8e 0 2px,transparent 2px 2.5px)"></div>
<div style="left:784.0px;top:355.4px;width:7px;height:0.8px;background:repeating-linear-gradient(90deg,#8e8e8e 0 2px,transparent 2px 2.5px)"></div>
<div style="left:464.7px;top:365.9px;width:161px;height:9.2px;background:linear-gradient(#919191,#a0a0a0);border:1px solid #5c5c5c;border-radius:4.6px"></div>
<div class="t" style="left:472.7px;top:366.1px;font-size:7.0px;color:#626262;-webkit-text-stroke:0.08px currentColor;">Factor:</div>
<div class="t r" style="left:418.70000000000005px;width:200px;text-align:right;top:366.1px;font-size:7.0px;color:#626262;">1.00</div>
<div style="left:630.6px;top:365.3px;width:161.3px;height:9.5px;background:linear-gradient(#626262,#575757);border:1px solid #474747;border-radius:2.5px"></div>
<div class="t" style="left:636.6px;top:366.15000000000003px;font-size:6.9px;color:#c8c8c8;-webkit-text-stroke:0.08px currentColor;">Add</div>
<svg style="position:absolute;left:786.5000000000001px;top:366.05px" width="4" height="8" viewBox="0 0 4 8"><path d="M0.4 3.2 L2 1 L3.6 3.2Z M0.4 4.8 L2 7 L3.6 4.8Z" fill="#cfcfcf"/></svg>
<div style="left:463px;top:378.4px;width:330.4px;height:1px;background:#5e5e5e"></div>
<div style="left:466.5px;top:383.4px;width:0;height:0;border-left:2.7px solid transparent;border-right:2.7px solid transparent;border-top:4.32px solid #000"></div>
<div style="left:473.0px;top:381.4px;width:8px;height:8px;background:linear-gradient(#555,#454545);border:0.7px solid #3a3a3a;border-radius:2.2px"></div>
<div class="t" style="left:483.6px;top:381.0px;font-size:7.4px;color:#000;">Environment Lighting</div>
<div style="left:784.0px;top:384.09999999999997px;width:7px;height:0.8px;background:repeating-linear-gradient(90deg,#8e8e8e 0 2px,transparent 2px 2.5px)"></div>
<div style="left:784.0px;top:386.09999999999997px;width:7px;height:0.8px;background:repeating-linear-gradient(90deg,#8e8e8e 0 2px,transparent 2px 2.5px)"></div>
<div style="left:464.7px;top:396.6px;width:161px;height:9.7px;background:linear-gradient(#919191,#a0a0a0);border:1px solid #5c5c5c;border-radius:4.85px"></div>
<div class="t" style="left:472.7px;top:397.05000000000007px;font-size:7.0px;color:#626262;-webkit-text-stroke:0.08px currentColor;">Energy:</div>
<div class="t r" style="left:418.70000000000005px;width:200px;text-align:right;top:397.05000000000007px;font-size:7.0px;color:#626262;">1.000</div>
<div style="left:467.7px;top:399.95000000000005px;width:0;height:0;border-top:1.5px solid transparent;border-bottom:1.5px solid transparent;border-right:2px solid #777"></div>
<div style="left:620.7px;top:399.95000000000005px;width:0;height:0;border-top:1.5px solid transparent;border-bottom:1.5px solid transparent;border-left:2px solid #777"></div>
<div style="left:630.6px;top:396.4px;width:161.3px;height:9.7px;background:linear-gradient(#626262,#575757);border:1px solid #474747;border-radius:2.5px"></div>
<div class="t" style="left:636.6px;top:397.35px;font-size:6.9px;color:#c8c8c8;-webkit-text-stroke:0.08px currentColor;">White</div>
<svg style="position:absolute;left:786.5000000000001px;top:397.25px" width="4" height="8" viewBox="0 0 4 8"><path d="M0.4 3.2 L2 1 L3.6 3.2Z M0.4 4.8 L2 7 L3.6 4.8Z" fill="#cfcfcf"/></svg>
<div style="left:463px;top:409.5px;width:330.4px;height:1px;background:#5e5e5e"></div>
<div style="left:466.5px;top:414.6px;width:0;height:0;border-left:2.7px solid transparent;border-right:2.7px solid transparent;border-top:4.32px solid #000"></div>
<div style="left:473.0px;top:412.6px;width:8px;height:8px;background:linear-gradient(#555,#454545);border:0.7px solid #3a3a3a;border-radius:2.2px"></div>
<div class="t" style="left:483.6px;top:412.20000000000005px;font-size:7.4px;color:#000;">Indirect Lighting</div>
<div style="left:784.0px;top:415.3px;width:7px;height:0.8px;background:repeating-linear-gradient(90deg,#8e8e8e 0 2px,transparent 2px 2.5px)"></div>
<div style="left:784.0px;top:417.3px;width:7px;height:0.8px;background:repeating-linear-gradient(90deg,#8e8e8e 0 2px,transparent 2px 2.5px)"></div>
<div style="left:464.7px;top:428.2px;width:161px;height:9.4px;background:linear-gradient(#919191,#a0a0a0);border:1px solid #5c5c5c;border-radius:4.7px"></div>
<div class="t" style="left:472.7px;top:428.5px;font-size:7.0px;color:#626262;-webkit-text-stroke:0.08px currentColor;">Factor:</div>
<div class="t r" style="left:418.70000000000005px;width:200px;text-align:right;top:428.5px;font-size:7.0px;color:#626262;">1.00</div>
<div style="left:630.6px;top:428.2px;width:161.3px;height:9.4px;background:linear-gradient(#919191,#a0a0a0);border:1px solid #5c5c5c;border-radius:4.7px"></div>
<div class="t" style="left:638.6px;top:428.5px;font-size:7.0px;color:#626262;-webkit-text-stroke:0.08px currentColor;">Bounces:</div>
<div class="t r" style="left:584.9000000000001px;width:200px;text-align:right;top:428.5px;font-size:7.0px;color:#626262;">1</div>
<div style="left:633.6px;top:431.4px;width:0;height:0;border-top:1.5px solid transparent;border-bottom:1.5px solid transparent;border-right:2px solid #777"></div>
<div style="left:786.9000000000001px;top:431.4px;width:0;height:0;border-top:1.5px solid transparent;border-bottom:1.5px solid transparent;border-left:2px solid #777"></div>
<div class="t" style="left:467.9px;top:441.40000000000003px;font-size:6.9px;color:#585858;">Only works with Approximate gather method</div>
<div style="left:463px;top:454.4px;width:330.4px;height:1px;background:#5e5e5e"></div>
<div style="left:466.5px;top:459.2px;width:0;height:0;border-left:2.7px solid transparent;border-right:2.7px solid transparent;border-top:4.32px solid #000"></div>
<div class="t" style="left:473.5px;top:456.8px;font-size:7.4px;color:#000;">Gather</div>
<div style="left:784.0px;top:459.9px;width:7px;height:0.8px;background:repeating-linear-gradient(90deg,#8e8e8e 0 2px,transparent 2px 2.5px)"></div>
<div style="left:784.0px;top:461.9px;width:7px;height:0.8px;background:repeating-linear-gradient(90deg,#8e8e8e 0 2px,transparent 2px 2.5px)"></div>
<div style="left:464.7px;top:471.3px;width:163px;height:10.2px;background:linear-gradient(#5d7090,#6b80a3);border:0.8px solid #4a5268;border-radius:2.5px 0 0 2.5px"></div>
<div class="t c" style="left:446px;width:200px;text-align:center;top:472.20000000000005px;font-size:6.8px;color:#2e3d5a;">Raytrace</div>
<div style="left:627.5px;top:471.3px;width:164.4px;height:10.2px;background:linear-gradient(#585858,#5e5e5e);border:0.8px solid #444;border-radius:0 2.5px 2.5px 0"></div>
<div class="t c" style="left:609.5px;width:200px;text-align:center;top:472.20000000000005px;font-size:6.8px;color:#c8c8c8;">Approximate</div>
<div class="t" style="left:467.9px;top:485.8px;font-size:6.8px;color:#5a5a5a;-webkit-text-stroke:0.08px currentColor;">Attenuation:</div>
<div class="t" style="left:634.4px;top:485.8px;font-size:6.8px;color:#5a5a5a;-webkit-text-stroke:0.08px currentColor;">Sampling:</div>
<div style="left:464.7px;top:496.7px;width:161px;height:9.2px;background:linear-gradient(#919191,#a0a0a0);border:1px solid #5c5c5c;border-radius:4.6px"></div>
<div class="t" style="left:472.7px;top:496.90000000000003px;font-size:7.0px;color:#626262;-webkit-text-stroke:0.08px currentColor;">Distance:</div>
<div class="t r" style="left:418.70000000000005px;width:200px;text-align:right;top:496.90000000000003px;font-size:7.0px;color:#626262;">10.000</div>
<div style="left:467.7px;top:499.8px;width:0;height:0;border-top:1.5px solid transparent;border-bottom:1.5px solid transparent;border-right:2px solid #777"></div>
<div style="left:620.7px;top:499.8px;width:0;height:0;border-top:1.5px solid transparent;border-bottom:1.5px solid transparent;border-left:2px solid #777"></div>
<div style="left:630.6px;top:496.3px;width:161.3px;height:9.3px;background:linear-gradient(#626262,#575757);border:1px solid #474747;border-radius:2.5px"></div>
<div class="t" style="left:636.6px;top:497.05px;font-size:6.9px;color:#c8c8c8;-webkit-text-stroke:0.08px currentColor;">Constant QMC</div>
<svg style="position:absolute;left:786.5000000000001px;top:496.95px" width="4" height="8" viewBox="0 0 4 8"><path d="M0.4 3.2 L2 1 L3.6 3.2Z M0.4 4.8 L2 7 L3.6 4.8Z" fill="#cfcfcf"/></svg>
<div style="left:464.7px;top:507.8px;width:161px;height:3px;background:#8a8a8a;border:1px solid #4a4a4a;border-radius:3px 3px 0 0"></div>
<div style="left:630.6px;top:507.8px;width:161.3px;height:3px;background:#8a8a8a;border:1px solid #4a4a4a;border-radius:3px 3px 0 0"></div>
<div style="left:796.8px;top:162px;width:5.8px;height:346px;background:#5f5f5f;border-radius:3px"></div>
<div style="left:796.9px;top:162.3px;width:5.6px;height:305px;background:linear-gradient(90deg,#868686,#929292);border:0.5px solid #6a6a6a;border-radius:3px"></div>
<div style="left:366px;top:79px;width:90px;height:8px;overflow:hidden">
<div style="left:4.6px;top:-4.5px;width:75.7px;height:11px;background:linear-gradient(#a8a8a8,#bdbdbd);border:1px solid #333;border-radius:5.5px"></div>
<div class="t" style="left:12.6px;top:-1.9px;font-size:7px">End:</div>
<div class="t r" style="left:-127px;width:200px;text-align:right;top:-1.9px;font-size:7px">1000.000</div>
</div>
<div class="t" style="left:373.6px;top:88.1px;font-size:6.6px;color:#555;-webkit-text-stroke:0.08px currentColor;">Local Camera:</div>
<div style="left:370.1px;top:98px;width:76.0px;height:9.2px;background:linear-gradient(#8e8e8e,#868686);border:1px solid #4e4e4e;border-radius:2.5px"></div>
<svg style="position:absolute;left:373px;top:99px" width="7" height="7" viewBox="0 0 7 7"><path d="M0.8 2 L3.5 0.6 L6.2 2 L6.2 5.2 L3.5 6.5 L0.8 5.2Z" fill="#c8964a"/></svg>
<div class="t" style="left:382.5px;top:98.19999999999999px;font-size:6.6px;color:#555;-webkit-text-stroke:0.08px currentColor;">Camera</div>
<svg style="position:absolute;left:440px;top:99.5px" width="6" height="6" viewBox="0 0 6 6"><path d="M1 1L5 5M5 1L1 5" stroke="#aaa" stroke-width="0.9"/></svg>
<div style="left:370.7px;top:111.5px;width:8px;height:8px;background:linear-gradient(#555,#454545);border:0.7px solid #3a3a3a;border-radius:2.2px"></div>
<div class="t" style="left:383px;top:111.1px;font-size:6.5px;color:#000;">Render Border</div>
<div style="left:368px;top:124.6px;width:80px;height:1px;background:#5e5e5e"></div>
<div style="left:371.5px;top:129.5px;width:0;height:0;border-left:2.7px solid transparent;border-right:2.7px solid transparent;border-top:4.32px solid #000"></div>
<div class="t" style="left:378.5px;top:127.1px;font-size:7.4px;color:#000;">3D Cursor</div>
<div style="left:437.5px;top:130.2px;width:7px;height:0.8px;background:repeating-linear-gradient(90deg,#8e8e8e 0 2px,transparent 2px 2.5px)"></div>
<div style="left:437.5px;top:132.2px;width:7px;height:0.8px;background:repeating-linear-gradient(90deg,#8e8e8e 0 2px,transparent 2px 2.5px)"></div>
<div class="t" style="left:373.6px;top:142.4px;font-size:6.6px;color:#000;">Location:</div>
<div style="left:370.1px;top:152.7px;width:76.0px;height:30px;background:#3a3a3a;border-radius:5px"></div>
<div style="left:370.1px;top:152.7px;width:76.0px;height:10.1px;background:linear-gradient(#a8a8a8,#bdbdbd);border:1px solid #404040;border-radius:5px 5px 0 0"></div>
<div class="t" style="left:378.1px;top:153.35px;font-size:7.0px;color:#000;">X:</div>
<div class="t r" style="left:239.10000000000002px;width:200px;text-align:right;top:153.35px;font-size:7.0px;color:#000;">-30.29482</div>
<div style="left:373.1px;top:156.25px;width:0;height:0;border-top:1.5px solid transparent;border-bottom:1.5px solid transparent;border-right:2px solid #777"></div>
<div style="left:441.1px;top:156.25px;width:0;height:0;border-top:1.5px solid transparent;border-bottom:1.5px solid transparent;border-left:2px solid #777"></div>
<div style="left:370.1px;top:162.5px;width:76.0px;height:10.1px;background:linear-gradient(#a8a8a8,#bdbdbd);border:1px solid #404040;border-radius:0"></div>
<div class="t" style="left:378.1px;top:163.15px;font-size:7.0px;color:#000;">Y:</div>
<div class="t r" style="left:239.10000000000002px;width:200px;text-align:right;top:163.15px;font-size:7.0px;color:#000;">-58.70304</div>
<div style="left:373.1px;top:166.05px;width:0;height:0;border-top:1.5px solid transparent;border-bottom:1.5px solid transparent;border-right:2px solid #777"></div>
<div style="left:441.1px;top:166.05px;width:0;height:0;border-top:1.5px solid transparent;border-bottom:1.5px solid transparent;border-left:2px solid #777"></div>
<div style="left:370.1px;top:172.4px;width:76.0px;height:10.1px;background:linear-gradient(#a8a8a8,#bdbdbd);border:1px solid #404040;border-radius:0 0 5px 5px"></div>
<div class="t" style="left:378.1px;top:173.05px;font-size:7.0px;color:#000;">Z:</div>
<div class="t r" style="left:239.10000000000002px;width:200px;text-align:right;top:173.05px;font-size:7.0px;color:#000;">-20.49290</div>
<div style="left:373.1px;top:175.95000000000002px;width:0;height:0;border-top:1.5px solid transparent;border-bottom:1.5px solid transparent;border-right:2px solid #777"></div>
<div style="left:441.1px;top:175.95000000000002px;width:0;height:0;border-top:1.5px solid transparent;border-bottom:1.5px solid transparent;border-left:2px solid #777"></div>
<div style="left:368px;top:186.8px;width:80px;height:1px;background:#5e5e5e"></div>
<div style="left:371.5px;top:192px;width:0;height:0;border-left:2.7px solid transparent;border-right:2.7px solid transparent;border-top:4.32px solid #000"></div>
<div class="t" style="left:378.5px;top:189.6px;font-size:7.4px;color:#000;">Item</div>
<div style="left:437.5px;top:192.7px;width:7px;height:0.8px;background:repeating-linear-gradient(90deg,#8e8e8e 0 2px,transparent 2px 2.5px)"></div>
<div style="left:437.5px;top:194.7px;width:7px;height:0.8px;background:repeating-linear-gradient(90deg,#8e8e8e 0 2px,transparent 2px 2.5px)"></div>
<svg style="position:absolute;left:371px;top:205px" width="8" height="8" viewBox="0 0 8 8"><path d="M0.8 2.2 L4 0.6 L7.2 2.2 L7.2 5.8 L4 7.4 L0.8 5.8Z" fill="#e08a2a" stroke="#7a4a14" stroke-width="0.4"/><path d="M0.8 2.2 L4 3.8 L7.2 2.2 M4 3.8V7.4" stroke="#f8c888" stroke-width="0.5" fill="none"/></svg>
<div style="left:384.5px;top:204.6px;width:61.8px;height:9.2px;background:linear-gradient(#9c9c9c,#b2b2b2);border:1px solid #2e2e2e;border-radius:2.5px"></div>
<div class="t" style="left:388px;top:204.9px;font-size:6.3px;color:#000;">Cube.001</div>
<div style="left:368px;top:218.7px;width:80px;height:1px;background:#5e5e5e"></div>
<div style="left:371.5px;top:223px;width:0;height:0;border-left:2.7px solid transparent;border-right:2.7px solid transparent;border-top:4.32px solid #000"></div>
<div class="t" style="left:378.5px;top:220.6px;font-size:7.4px;color:#000;">Display</div>
<div style="left:437.5px;top:223.7px;width:7px;height:0.8px;background:repeating-linear-gradient(90deg,#8e8e8e 0 2px,transparent 2px 2.5px)"></div>
<div style="left:437.5px;top:225.7px;width:7px;height:0.8px;background:repeating-linear-gradient(90deg,#8e8e8e 0 2px,transparent 2px 2.5px)"></div>
<div style="left:370.7px;top:236.8px;width:8px;height:8px;background:linear-gradient(#555,#454545);border:0.7px solid #3a3a3a;border-radius:2.2px"></div>
<svg style="position:absolute;left:370.7px;top:236.0px" width="9" height="9" viewBox="0 0 9 9"><path d="M2 4.8 L3.7 6.5 L7.2 1.8" fill="none" stroke="#f4f4f4" stroke-width="1.05"/></svg>
<div class="t" style="left:383px;top:236.4px;font-size:6.5px;color:#fff;-webkit-text-stroke:0.08px currentColor;">Only Render</div>
<div style="left:370.7px;top:248.3px;width:8px;height:8px;background:linear-gradient(#555,#454545);border:0.7px solid #3a3a3a;border-radius:2.2px"></div>
<svg style="position:absolute;left:370.7px;top:247.5px" width="9" height="9" viewBox="0 0 9 9"><path d="M2 4.8 L3.7 6.5 L7.2 1.8" fill="none" stroke="#f4f4f4" stroke-width="1.05"/></svg>
<div class="t" style="left:383px;top:247.9px;font-size:6.5px;color:#fff;-webkit-text-stroke:0.08px currentColor;">World Background</div>
<div style="left:366.2px;top:243.8px;width:72.6px;height:17.6px;border:2.8px solid #14b4ee;border-radius:9px"></div>
<div style="left:370.7px;top:261.5px;width:8px;height:8px;background:linear-gradient(#646464,#5a5a5a);border:0.7px solid #585858;border-radius:2.2px"></div>
<svg style="position:absolute;left:370.7px;top:260.7px" width="9" height="9" viewBox="0 0 9 9"><path d="M2 4.8 L3.7 6.5 L7.2 1.8" fill="none" stroke="#a8a8a8" stroke-width="1.05"/></svg>
<div class="t" style="left:383px;top:261.1px;font-size:6.5px;color:#a4a4a4;">Outline Selected</div>
<div style="left:370.7px;top:272.6px;width:8px;height:8px;background:linear-gradient(#646464,#5a5a5a);border:0.7px solid #585858;border-radius:2.2px"></div>
<div class="t" style="left:383px;top:272.20000000000005px;font-size:6.5px;color:#555;-webkit-text-stroke:0.08px currentColor;">All Object Origins</div>
<div style="left:370.7px;top:284.3px;width:8px;height:8px;background:linear-gradient(#646464,#5a5a5a);border:0.7px solid #585858;border-radius:2.2px"></div>
<svg style="position:absolute;left:370.7px;top:283.5px" width="9" height="9" viewBox="0 0 9 9"><path d="M2 4.8 L3.7 6.5 L7.2 1.8" fill="none" stroke="#a8a8a8" stroke-width="1.05"/></svg>
<div class="t" style="left:383px;top:283.90000000000003px;font-size:6.5px;color:#a4a4a4;">Relationship Lines</div>
<div style="left:370.7px;top:297.0px;width:8px;height:8px;background:linear-gradient(#646464,#5a5a5a);border:0.7px solid #585858;border-radius:2.2px"></div>
<div class="t" style="left:383px;top:296.6px;font-size:6.5px;color:#555;-webkit-text-stroke:0.08px currentColor;">Grid Floor</div>
<div style="left:413px;top:296px;width:33.3px;height:9.7px;background:#6c6c6c;border:0.8px solid #585858;border-radius:3px"></div>
<div style="left:435.2px;top:296.4px;width:10.7px;height:8.9px;background:#8a8a8a;border-radius:0 2.5px 2.5px 0"></div>
<div style="left:424px;top:296.5px;width:0.7px;height:8.7px;background:#5a5a5a"></div>
<div style="left:435.2px;top:296.5px;width:0.7px;height:8.7px;background:#5a5a5a"></div>
<div class="t c" style="left:318.5px;width:200px;text-align:center;top:296.6px;font-size:6.5px;color:#c4c4c4;">X</div>
<div class="t c" style="left:329.6px;width:200px;text-align:center;top:296.6px;font-size:6.5px;color:#c4c4c4;">Y</div>
<div class="t c" style="left:340.8px;width:200px;text-align:center;top:296.6px;font-size:6.5px;color:#5e5e5e;">Z</div>
<div style="left:370.1px;top:307.8px;width:76.0px;height:29.8px;background:#555;border-radius:5px"></div>
<div style="left:370.1px;top:307.8px;width:76.0px;height:9.8px;background:linear-gradient(#919191,#a0a0a0);border:1px solid #5c5c5c;border-radius:5px 5px 0 0"></div>
<div class="t" style="left:378.1px;top:308.3px;font-size:7.0px;color:#626262;-webkit-text-stroke:0.08px currentColor;">Lines:</div>
<div class="t r" style="left:239.10000000000002px;width:200px;text-align:right;top:308.3px;font-size:7.0px;color:#626262;">16</div>
<div style="left:373.1px;top:311.2px;width:0;height:0;border-top:1.5px solid transparent;border-bottom:1.5px solid transparent;border-right:2px solid #777"></div>
<div style="left:441.1px;top:311.2px;width:0;height:0;border-top:1.5px solid transparent;border-bottom:1.5px solid transparent;border-left:2px solid #777"></div>
<div style="left:370.1px;top:317.6px;width:76.0px;height:10px;background:linear-gradient(#919191,#a0a0a0);border:1px solid #5c5c5c;border-radius:0"></div>
<div class="t" style="left:378.1px;top:318.20000000000005px;font-size:7.0px;color:#626262;-webkit-text-stroke:0.08px currentColor;">Scale:</div>
<div class="t r" style="left:239.10000000000002px;width:200px;text-align:right;top:318.20000000000005px;font-size:7.0px;color:#626262;">1.000</div>
<div style="left:373.1px;top:321.1px;width:0;height:0;border-top:1.5px solid transparent;border-bottom:1.5px solid transparent;border-right:2px solid #777"></div>
<div style="left:441.1px;top:321.1px;width:0;height:0;border-top:1.5px solid transparent;border-bottom:1.5px solid transparent;border-left:2px solid #777"></div>
<div style="left:370.1px;top:327.5px;width:76.0px;height:10.1px;background:linear-gradient(#919191,#a0a0a0);border:1px solid #5c5c5c;border-radius:0 0 5px 5px"></div>
<div class="t" style="left:378.1px;top:328.15000000000003px;font-size:7.0px;color:#626262;-webkit-text-stroke:0.08px currentColor;">Subdivisions:</div>
<div class="t r" style="left:239.10000000000002px;width:200px;text-align:right;top:328.15000000000003px;font-size:7.0px;color:#626262;">10</div>
<div style="left:373.1px;top:331.05px;width:0;height:0;border-top:1.5px solid transparent;border-bottom:1.5px solid transparent;border-right:2px solid #777"></div>
<div style="left:441.1px;top:331.05px;width:0;height:0;border-top:1.5px solid transparent;border-bottom:1.5px solid transparent;border-left:2px solid #777"></div>
<div style="left:370.1px;top:346.8px;width:76.0px;height:10px;background:linear-gradient(#a6a6a6,#8f8f8f);border:1px solid #2a2a2a;border-radius:2.5px"></div>
<div class="t c" style="left:308.1px;width:200px;text-align:center;top:347.40000000000003px;font-size:6.8px;color:#000;">Toggle Quad View</div>
<div style="left:368px;top:361px;width:80px;height:1px;background:#5e5e5e"></div>
<div style="left:371.5px;top:365.4px;width:0;height:0;border-left:2.7px solid transparent;border-right:2.7px solid transparent;border-top:4.32px solid #000"></div>
<div class="t" style="left:378.5px;top:363.0px;font-size:7.4px;color:#000;">Shading</div>
<div style="left:437.5px;top:366.09999999999997px;width:7px;height:0.8px;background:repeating-linear-gradient(90deg,#8e8e8e 0 2px,transparent 2px 2.5px)"></div>
<div style="left:437.5px;top:368.09999999999997px;width:7px;height:0.8px;background:repeating-linear-gradient(90deg,#8e8e8e 0 2px,transparent 2px 2.5px)"></div>
<div style="left:370.1px;top:378px;width:76.0px;height:9.6px;background:linear-gradient(#505050,#3a3a3a);border:1px solid #222;border-radius:2.5px"></div>
<div class="t" style="left:373.1px;top:378.90000000000003px;font-size:6.9px;color:#fff;-webkit-text-stroke:0.08px currentColor;">Multitexture</div>
<svg style="position:absolute;left:440.70000000000005px;top:378.8px" width="4" height="8" viewBox="0 0 4 8"><path d="M0.4 3.2 L2 1 L3.6 3.2Z M0.4 4.8 L2 7 L3.6 4.8Z" fill="#cfcfcf"/></svg>
<div style="left:370.7px;top:390.7px;width:8px;height:8px;background:linear-gradient(#555,#454545);border:0.7px solid #3a3a3a;border-radius:2.2px"></div>
<div class="t" style="left:383px;top:390.3px;font-size:6.5px;color:#000;">Backface Culling</div>
<div style="left:370.7px;top:402.2px;width:8px;height:8px;background:linear-gradient(#646464,#5a5a5a);border:0.7px solid #585858;border-radius:2.2px"></div>
<div class="t" style="left:383px;top:401.8px;font-size:6.5px;color:#5e5e5e;">Depth Of Field</div>
<div style="left:370.7px;top:413.7px;width:8px;height:8px;background:linear-gradient(#555,#454545);border:0.7px solid #3a3a3a;border-radius:2.2px"></div>
<div class="t" style="left:383px;top:413.3px;font-size:6.5px;color:#000;">Ambient Occlusion</div>
<div style="left:368px;top:426.3px;width:80px;height:1px;background:#5e5e5e"></div>
<div style="left:372px;top:430.40000000000003px;width:0;height:0;border-top:2.7px solid transparent;border-bottom:2.7px solid transparent;border-left:4.32px solid #000"></div>
<div style="left:378.3px;top:429.1px;width:8px;height:8px;background:linear-gradient(#555,#454545);border:0.7px solid #3a3a3a;border-radius:2.2px"></div>
<svg style="position:absolute;left:378.3px;top:428.3px" width="9" height="9" viewBox="0 0 9 9"><path d="M2 4.8 L3.7 6.5 L7.2 1.8" fill="none" stroke="#f4f4f4" stroke-width="1.05"/></svg>
<div class="t" style="left:389px;top:428.70000000000005px;font-size:7.4px;color:#000;">Motion Tracking</div>
<div style="left:437.5px;top:431.8px;width:7px;height:0.8px;background:repeating-linear-gradient(90deg,#8e8e8e 0 2px,transparent 2px 2.5px)"></div>
<div style="left:437.5px;top:433.8px;width:7px;height:0.8px;background:repeating-linear-gradient(90deg,#8e8e8e 0 2px,transparent 2px 2.5px)"></div>
<div style="left:368px;top:438.7px;width:80px;height:1px;background:#5e5e5e"></div>
<div style="left:371.5px;top:443.5px;width:0;height:0;border-left:2.7px solid transparent;border-right:2.7px solid transparent;border-top:4.32px solid #000"></div>
<div style="left:378.3px;top:441.5px;width:8px;height:8px;background:linear-gradient(#555,#454545);border:0.7px solid #3a3a3a;border-radius:2.2px"></div>
<div class="t" style="left:389px;top:441.1px;font-size:7.4px;color:#000;">Background Images</div>
<div style="left:370.1px;top:456.8px;width:76.0px;height:9px;background:linear-gradient(#a6a6a6,#8f8f8f);border:1px solid #2a2a2a;border-radius:2.5px"></div>
<div class="t c" style="left:308.1px;width:200px;text-align:center;top:456.90000000000003px;font-size:6.8px;color:#000;">Add Image</div>
<div style="left:368px;top:470px;width:80px;height:1px;background:#5e5e5e"></div>
<div style="left:372px;top:474.1px;width:0;height:0;border-top:2.7px solid transparent;border-bottom:2.7px solid transparent;border-left:4.32px solid #000"></div>
<div class="t" style="left:378.5px;top:472.40000000000003px;font-size:7.4px;color:#000;">Transform Orientations</div>
<div style="left:450.8px;top:82px;width:6.2px;height:398px;background:#616161;border-radius:3px"></div>
<div style="left:450.9px;top:271px;width:5.8px;height:208.5px;background:linear-gradient(90deg,#868686,#929292);border:0.5px solid #6a6a6a;border-radius:3px"></div>
<div style="left:452.5px;top:79px;width:6.5px;height:7px;background:repeating-linear-gradient(45deg,#4a4a4a 0 0.9px,transparent 0.9px 1.8px);clip-path:polygon(0 0,100% 0,100% 100%)"></div>
<div style="left:60.8px;top:485px;width:15.8px;height:9.3px;background:linear-gradient(#474747,#363636);border:0.8px solid #2a2a2a;border-radius:2.5px"></div>
<svg style="position:absolute;left:70.8px;top:485.65px" width="4" height="8" viewBox="0 0 4 8"><path d="M0.4 3.2 L2 1 L3.6 3.2Z M0.4 4.8 L2 7 L3.6 4.8Z" fill="#a8a8a8"/></svg>
<svg style="position:absolute;left:62.5px;top:486px" width="8" height="8" viewBox="0 0 8 8"><path d="M1 2.2 L4 0.8 L7 2.2 L7 5.8 L4 7.2 L1 5.8Z" fill="#ddd" stroke="#555" stroke-width="0.4"/><path d="M1 2.2 L4 3.6 L7 2.2 M4 3.6V7.2" stroke="#888" stroke-width="0.5" fill="none"/></svg>
<div class="t" style="left:82.9px;top:485.90000000000003px;font-size:6.5px;color:#000;">View</div>
<div class="t" style="left:106.6px;top:485.90000000000003px;font-size:6.5px;color:#000;">Select</div>
<div class="t" style="left:132.9px;top:485.90000000000003px;font-size:6.5px;color:#000;">Add</div>
<div class="t" style="left:153.8px;top:485.90000000000003px;font-size:6.5px;color:#000;">Object</div>
<div style="left:177.1px;top:485px;width:58.9px;height:9.3px;background:linear-gradient(#505050,#3a3a3a);border:1px solid #222;border-radius:2.5px"></div>
<div class="t" style="left:190.1px;top:485.75px;font-size:6.9px;color:#fff;-webkit-text-stroke:0.08px currentColor;">Object Mode</div>
<svg style="position:absolute;left:230.6px;top:485.65px" width="4" height="8" viewBox="0 0 4 8"><path d="M0.4 3.2 L2 1 L3.6 3.2Z M0.4 4.8 L2 7 L3.6 4.8Z" fill="#cfcfcf"/></svg>
<svg style="position:absolute;left:179.5px;top:486px" width="8" height="8" viewBox="0 0 8 8"><path d="M1 2.2 L4 0.8 L7 2.2 L7 5.8 L4 7.2 L1 5.8Z" fill="#e8a040" stroke="#8a5010" stroke-width="0.4"/><path d="M1 2.2 L4 3.6 L7 2.2 M4 3.6V7.2" stroke="#f8d090" stroke-width="0.5" fill="none"/></svg>
<div style="left:238.6px;top:485px;width:16.5px;height:9.3px;background:linear-gradient(#474747,#363636);border:0.8px solid #2a2a2a;border-radius:2.5px"></div>
<svg style="position:absolute;left:249.29999999999998px;top:485.65px" width="4" height="8" viewBox="0 0 4 8"><path d="M0.4 3.2 L2 1 L3.6 3.2Z M0.4 4.8 L2 7 L3.6 4.8Z" fill="#a8a8a8"/></svg>
<svg style="position:absolute;left:240.5px;top:486.3px" width="7" height="7" viewBox="0 0 7 7"><circle cx="3.5" cy="3.5" r="3.2" fill="#f2f2f2" stroke="#444" stroke-width="0.4"/><path d="M3.5 0.3 A3.2 3.2 0 0 1 6.7 3.5 L3.5 3.5Z" fill="#c04040"/><path d="M0.3 3.5 A3.2 3.2 0 0 0 3.5 6.7 L3.5 3.5Z" fill="#a03030"/></svg>
<div style="left:257.9px;top:485px;width:16px;height:9.3px;background:linear-gradient(#474747,#363636);border:0.8px solid #2a2a2a;border-radius:2.5px"></div>
<svg style="position:absolute;left:268.09999999999997px;top:485.65px" width="4" height="8" viewBox="0 0 4 8"><path d="M0.4 3.2 L2 1 L3.6 3.2Z M0.4 4.8 L2 7 L3.6 4.8Z" fill="#a8a8a8"/></svg>
<svg style="position:absolute;left:259.5px;top:486px" width="8" height="8" viewBox="0 0 8 8"><circle cx="4" cy="4" r="3" fill="none" stroke="#9cf" stroke-width="0.5" stroke-dasharray="1 1"/><circle cx="4" cy="4" r="1.6" fill="#3a7bd5"/></svg>
<div style="left:274px;top:485px;width:9.7px;height:9.3px;background:#8b8b8b;border:1px solid #555;border-radius:0 2.5px 2.5px 0"></div>
<svg style="position:absolute;left:275.5px;top:486.5px" width="7" height="6.5" viewBox="0 0 7 6.5"><path d="M0.5 0.5h6M0.5 3h6M0.5 5.7h6M1 0.5v6M3.5 0.5v6M6 0.5v6" stroke="#6fa0e0" stroke-width="0.5"/></svg>
<div style="left:287.9px;top:485px;width:47.4px;height:9.3px;background:linear-gradient(#505050,#3a3a3a);border:1px solid #222;border-radius:2.5px"></div>
<div class="t" style="left:300.9px;top:485.75px;font-size:6.9px;color:#fff;-webkit-text-stroke:0.08px currentColor;">Global</div>
<svg style="position:absolute;left:329.9px;top:485.65px" width="4" height="8" viewBox="0 0 4 8"><path d="M0.4 3.2 L2 1 L3.6 3.2Z M0.4 4.8 L2 7 L3.6 4.8Z" fill="#cfcfcf"/></svg>
<div style="left:287.9px;top:485px;width:10px;height:9.3px;background:#8f8f8f;border:1px solid #333;border-radius:2.5px 0 0 2.5px"></div>
<svg style="position:absolute;left:289px;top:486px" width="8" height="8" viewBox="0 0 8 8"><path d="M4 4V0.5" stroke="#4a7fd0" stroke-width="1"/><path d="M4 4L0.8 7" stroke="#d04040" stroke-width="1"/><path d="M4 4L7.2 7" stroke="#40b040" stroke-width="1"/></svg>
<div style="left:338.3px;top:485.3px;width:25.5px;height:9.2px;background:#8c8c8c;border:0.6px solid #4a4a4a;border-radius:1.5px"></div>
<div style="left:343.40000000000003px;top:485.3px;width:0.6px;height:9.2px;background:#5e5e5e"></div>
<div style="left:348.5px;top:485.3px;width:0.6px;height:9.2px;background:#5e5e5e"></div>
<div style="left:353.6px;top:485.3px;width:0.6px;height:9.2px;background:#5e5e5e"></div>
<div style="left:358.7px;top:485.3px;width:0.6px;height:9.2px;background:#5e5e5e"></div>
<div style="left:338.3px;top:489.90000000000003px;width:25.5px;height:0.6px;background:#5e5e5e"></div>
<div style="left:348.5px;top:489.9px;width:5.1px;height:4.6px;background:#5e5e5e"></div>
<div style="left:339px;top:485.6px;width:1.5px;height:1.5px;background:#e89030;border-radius:50%"></div>
<div style="left:366.9px;top:485.3px;width:25.5px;height:9.2px;background:#8c8c8c;border:0.6px solid #4a4a4a;border-radius:1.5px"></div>
<div style="left:372.0px;top:485.3px;width:0.6px;height:9.2px;background:#5e5e5e"></div>
<div style="left:377.09999999999997px;top:485.3px;width:0.6px;height:9.2px;background:#5e5e5e"></div>
<div style="left:382.2px;top:485.3px;width:0.6px;height:9.2px;background:#5e5e5e"></div>
<div style="left:387.29999999999995px;top:485.3px;width:0.6px;height:9.2px;background:#5e5e5e"></div>
<div style="left:366.9px;top:489.90000000000003px;width:25.5px;height:0.6px;background:#5e5e5e"></div>
<div style="left:396px;top:485px;width:9.4px;height:9.3px;background:linear-gradient(#6a6a6a,#565656);border:1px solid #333;border-radius:2.5px"></div>
<svg style="position:absolute;left:397.5px;top:486.5px" width="7" height="6.5" viewBox="0 0 7 6.5"><rect x="0.5" y="0.5" width="5" height="5" fill="#ddd"/><rect x="3" y="2.5" width="3.5" height="3.5" fill="#777"/></svg>
<div style="left:408.3px;top:485px;width:10.2px;height:9.3px;background:linear-gradient(#8a8a8a,#7a7a7a);border:1px solid #555;border-radius:2.5px"></div>
<svg style="position:absolute;left:410px;top:486.3px" width="7" height="7" viewBox="0 0 7 7"><circle cx="3.5" cy="3.5" r="3" fill="none" stroke="#666" stroke-width="0.6"/><circle cx="3.5" cy="3.5" r="1.8" fill="none" stroke="#666" stroke-width="0.5"/></svg>
<div style="left:422px;top:485px;width:10.5px;height:9.3px;background:linear-gradient(#8a8a8a,#7a7a7a);border:1px solid #555;border-radius:2.5px 0 0 2.5px"></div>
<svg style="position:absolute;left:423.5px;top:486.3px" width="7" height="7" viewBox="0 0 7 7"><path d="M1 6 Q1 1 4 2 Q6 3 6 5" fill="none" stroke="#666" stroke-width="0.8"/><path d="M2 6L6 1" stroke="#666" stroke-width="0.6"/></svg>
<div style="left:432.5px;top:485px;width:15.8px;height:9.3px;background:linear-gradient(#3c3c3c,#2e2e2e);border:1px solid #222;border-radius:0 2.5px 2.5px 0"></div>
<svg style="position:absolute;left:434px;top:486px" width="9" height="8" viewBox="0 0 9 8"><path d="M4.5 0.5V7.5" stroke="#6fa0e0" stroke-width="1.2"/><path d="M0.5 4H3.5M5.5 4H8.5" stroke="#ddd" stroke-width="0.7"/><path d="M1.5 3L0.5 4L1.5 5M7.5 3L8.5 4L7.5 5" stroke="#ddd" stroke-width="0.5" fill="none"/></svg>
<svg style="position:absolute;left:443.1px;top:485.65px" width="4" height="8" viewBox="0 0 4 8"><path d="M0.4 3.2 L2 1 L3.6 3.2Z M0.4 4.8 L2 7 L3.6 4.8Z" fill="#bbb"/></svg>
<div style="left:449px;top:485px;width:9.5px;height:9.3px;background:linear-gradient(#8c8c8c,#7c7c7c);border:1px solid #444;border-radius:2.5px"></div>
<svg style="position:absolute;left:450.3px;top:486px" width="7" height="7.5" viewBox="0 0 7 7.5"><circle cx="2.5" cy="2" r="1.8" fill="#3a7bd5" stroke="#fff" stroke-width="0.4"/><path d="M0.5 5h6M0.5 6.8h6" stroke="#eee" stroke-width="0.6"/></svg>
<div style="left:55px;top:486px;width:6px;height:6px;background:repeating-linear-gradient(45deg,#4a4a4a 0 0.9px,transparent 0.9px 1.8px);clip-path:polygon(0 0,100% 100%,0 100%)"></div>
<div style="left:60.8px;top:498.5px;width:15.8px;height:9.5px;background:linear-gradient(#474747,#363636);border:0.8px solid #2a2a2a;border-radius:2.5px"></div>
<svg style="position:absolute;left:70.8px;top:499.25px" width="4" height="8" viewBox="0 0 4 8"><path d="M0.4 3.2 L2 1 L3.6 3.2Z M0.4 4.8 L2 7 L3.6 4.8Z" fill="#a8a8a8"/></svg>
<svg style="position:absolute;left:62.5px;top:499.5px" width="8" height="8" viewBox="0 0 8 8"><circle cx="4" cy="4" r="3.4" fill="#eee" stroke="#333" stroke-width="0.5"/><path d="M4 1.5V4L5.5 5.5" stroke="#c03030" stroke-width="0.8" fill="none"/></svg>
<div class="t" style="left:82.9px;top:499.70000000000005px;font-size:6.5px;color:#000;">View</div>
<div class="t" style="left:106.6px;top:499.70000000000005px;font-size:6.5px;color:#000;">Marker</div>
<div class="t" style="left:135.2px;top:499.70000000000005px;font-size:6.5px;color:#000;">Frame</div>
<div class="t" style="left:162px;top:499.70000000000005px;font-size:6.5px;color:#000;">Playback</div>
<div style="left:192.7px;top:498.5px;width:10px;height:9.5px;background:linear-gradient(#9a9a9a,#888);border:1px solid #444;border-radius:2.5px 0 0 2.5px"></div>
<div style="left:202.7px;top:498.5px;width:10px;height:9.5px;background:linear-gradient(#9a9a9a,#888);border:1px solid #444;border-radius:0 2.5px 2.5px 0"></div>
<svg style="position:absolute;left:194px;top:499.5px" width="8" height="8" viewBox="0 0 8 8"><circle cx="4" cy="4" r="3.2" fill="#eee" stroke="#444" stroke-width="0.4"/><path d="M4 4 L4 0.8 A3.2 3.2 0 0 1 7.2 4Z" fill="#e8902a"/></svg>
<svg style="position:absolute;left:204.3px;top:499.5px" width="7" height="8" viewBox="0 0 7 8"><rect x="1" y="3" width="5" height="4.5" fill="#ddd" stroke="#555" stroke-width="0.4"/><path d="M2 3V2A1.5 1.5 0 0 1 5 2V3" fill="none" stroke="#ddd" stroke-width="0.7"/></svg>
<div style="left:216.6px;top:498.5px;width:59.8px;height:9.7px;background:linear-gradient(#a8a8a8,#bdbdbd);border:1px solid #404040;border-radius:5px 0 0 5px"></div>
<div class="t" style="left:224.6px;top:498.95000000000005px;font-size:7.0px;color:#000;">Start:</div>
<div class="t r" style="left:69.39999999999998px;width:200px;text-align:right;top:498.95000000000005px;font-size:7.0px;color:#000;">1</div>
<div style="left:219.6px;top:501.85px;width:0;height:0;border-top:1.5px solid transparent;border-bottom:1.5px solid transparent;border-right:2px solid #777"></div>
<div style="left:271.4px;top:501.85px;width:0;height:0;border-top:1.5px solid transparent;border-bottom:1.5px solid transparent;border-left:2px solid #777"></div>
<div style="left:276px;top:498.5px;width:58px;height:9.7px;background:linear-gradient(#a8a8a8,#bdbdbd);border:1px solid #404040;border-radius:0 5px 5px 0"></div>
<div class="t" style="left:284px;top:498.95000000000005px;font-size:7.0px;color:#000;">End:</div>
<div class="t r" style="left:127px;width:200px;text-align:right;top:498.95000000000005px;font-size:7.0px;color:#000;">250</div>
<div style="left:279px;top:501.85px;width:0;height:0;border-top:1.5px solid transparent;border-bottom:1.5px solid transparent;border-right:2px solid #777"></div>
<div style="left:329px;top:501.85px;width:0;height:0;border-top:1.5px solid transparent;border-bottom:1.5px solid transparent;border-left:2px solid #777"></div>
<div style="left:338.1px;top:498.5px;width:44.8px;height:9.7px;background:linear-gradient(#a8a8a8,#bdbdbd);border:1px solid #404040;border-radius:4.85px"></div>
<div class="t" style="left:346.1px;top:498.95000000000005px;font-size:7.0px;color:#000;"></div>
<div class="t r" style="left:175.90000000000003px;width:200px;text-align:right;top:498.95000000000005px;font-size:7.0px;color:#000;">1</div>
<div style="left:341.1px;top:501.85px;width:0;height:0;border-top:1.5px solid transparent;border-bottom:1.5px solid transparent;border-right:2px solid #777"></div>
<div style="left:377.90000000000003px;top:501.85px;width:0;height:0;border-top:1.5px solid transparent;border-bottom:1.5px solid transparent;border-left:2px solid #777"></div>
<div style="left:393.0px;top:498.5px;width:10.17px;height:9.7px;background:linear-gradient(#a0a0a0,#8e8e8e);border:0.7px solid #444;border-radius:2.5px 0 0 2.5px"></div>
<div style="left:403.17px;top:498.5px;width:10.17px;height:9.7px;background:linear-gradient(#a0a0a0,#8e8e8e);border:0.7px solid #444;"></div>
<div style="left:413.34px;top:498.5px;width:10.17px;height:9.7px;background:linear-gradient(#a0a0a0,#8e8e8e);border:0.7px solid #444;"></div>
<div style="left:423.51px;top:498.5px;width:10.17px;height:9.7px;background:linear-gradient(#a0a0a0,#8e8e8e);border:0.7px solid #444;"></div>
<div style="left:433.68px;top:498.5px;width:10.17px;height:9.7px;background:linear-gradient(#a0a0a0,#8e8e8e);border:0.7px solid #444;"></div>
<div style="left:443.85px;top:498.5px;width:10.17px;height:9.7px;background:linear-gradient(#a0a0a0,#8e8e8e);border:0.7px solid #444;border-radius:0 2.5px 2.5px 0"></div>
<svg style="position:absolute;left:394.1px;top:499.3px" width="8" height="8" viewBox="0 0 8 8"><path d="M1 1V7M7 1L4 4L7 7M4 1L1 4L4 7" stroke="#f2f2f2" stroke-width="0.9" fill="none"/></svg>
<svg style="position:absolute;left:404.27000000000004px;top:499.3px" width="8" height="8" viewBox="0 0 8 8"><path d="M7 1L4 4L7 7M4.5 1L1.5 4L4.5 7" stroke="#f2f2f2" stroke-width="0.9" fill="none"/></svg>
<svg style="position:absolute;left:414.44px;top:499.3px" width="8" height="8" viewBox="0 0 8 8"><path d="M6 0.8L1.8 4L6 7.2Z" fill="#f4f4f4" stroke="#333" stroke-width="0.4"/></svg>
<svg style="position:absolute;left:424.61px;top:499.3px" width="8" height="8" viewBox="0 0 8 8"><path d="M2 0.8L6.2 4L2 7.2Z" fill="#f4f4f4" stroke="#333" stroke-width="0.4"/></svg>
<svg style="position:absolute;left:434.78000000000003px;top:499.3px" width="8" height="8" viewBox="0 0 8 8"><path d="M1 1L4 4L1 7M3.5 1L6.5 4L3.5 7" stroke="#f2f2f2" stroke-width="0.9" fill="none"/></svg>
<svg style="position:absolute;left:444.95000000000005px;top:499.3px" width="8" height="8" viewBox="0 0 8 8"><path d="M7 1V7M1 1L4 4L1 7M4 1L7 4L4 7" stroke="#f2f2f2" stroke-width="0.9" fill="none"/></svg>
<div style="left:453px;top:497px;width:6px;height:6px;background:repeating-linear-gradient(45deg,#4a4a4a 0 0.9px,transparent 0.9px 1.8px);clip-path:polygon(0 0,100% 0,100% 100%)"></div>
<div style="left:460px;top:503.5px;width:7px;height:7px;background:repeating-linear-gradient(45deg,#4a4a4a 0 0.9px,transparent 0.9px 1.8px);clip-path:polygon(0 0,100% 100%,0 100%)"></div></div></body></html>
